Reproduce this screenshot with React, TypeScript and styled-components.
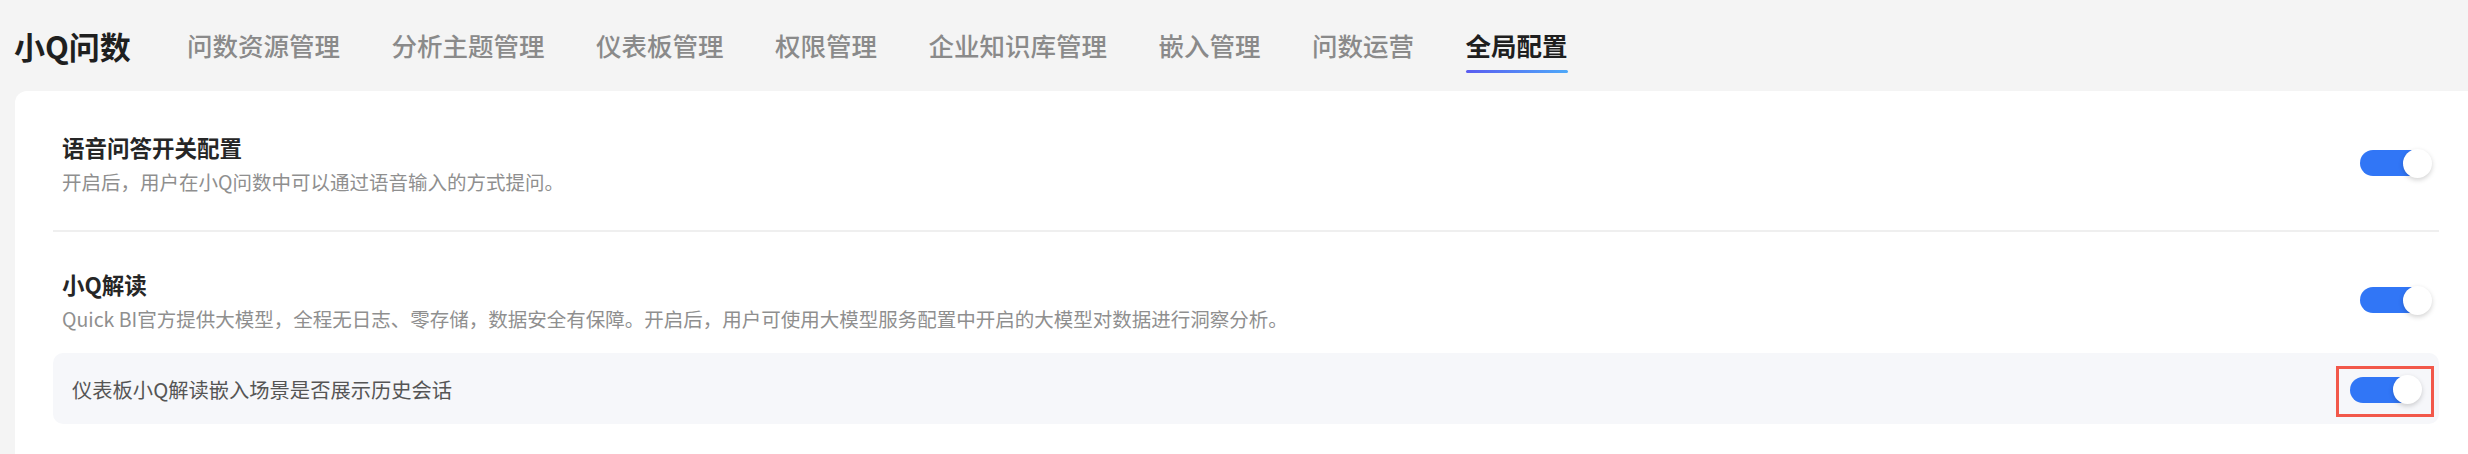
import styled, { createGlobalStyle } from "styled-components"

const GlobalStyle = createGlobalStyle`
  html, body {
    margin: 0;
    padding: 0;
    background: #f4f4f4;
    overflow: hidden;
    font-family: "Noto Sans CJK SC", "Noto Sans", sans-serif;
  }
`

const navItems = ['问数资源管理', '分析主题管理', '仪表板管理', '权限管理', '企业知识库管理', '嵌入管理', '问数运营', '全局配置']

export default function App() {
  return <Page>
    <GlobalStyle />
    <Header>
      <Brand>小Q问数</Brand>
      <Nav>
        {navItems.map(item => (
          <NavItem key={item} active={item === '全局配置'}>{item}</NavItem>
        ))}
      </Nav>
    </Header>

    <Card>
      <Section>
        <Row>
          <Info>
            <Title>语音问答开关配置</Title>
            <Desc>开启后，用户在小Q问数中可以通过语音输入的方式提问。</Desc>
          </Info>
          <Switch />
        </Row>
      </Section>

      <Divider />

      <Section>
        <Row>
          <Info>
            <Title>小Q解读</Title>
            <Desc>Quick BI官方提供大模型，全程无日志、零存储，数据安全有保障。开启后，用户可使用大模型服务配置中开启的大模型对数据进行洞察分析。</Desc>
          </Info>
          <Switch />
        </Row>
        <SubRow>
          <SubLabel>仪表板小Q解读嵌入场景是否展示历史会话</SubLabel>
          <Marked>
            <Switch />
          </Marked>
        </SubRow>
      </Section>
    </Card>
  </Page>
}

function Switch() {
  return <Track>
    <Knob />
  </Track>
}

const Page = styled.div`
  width: 100%;
  height: 454px;
  display: flex;
  flex-direction: column;
`

const Header = styled.div`
  height: 91px;
  flex-shrink: 0;
  display: flex;
  align-items: center;
  gap: 56px;
  padding-left: 14px;
  box-sizing: border-box;
`

const Brand = styled.div`
  font-size: 31px;
  font-weight: 700;
  color: #1f1f1f;
  line-height: 40px;
`

const Nav = styled.div`
  display: flex;
  align-items: center;
  gap: 51.5px;
`

const NavItem = styled.div<{ active?: boolean }>`
  position: relative;
  font-size: 25.5px;
  line-height: 36px;
  color: ${p => p.active ? '#1f1f1f' : '#8a8a8a'};
  font-weight: ${p => p.active ? 700 : 500};
  margin-top: -2px;

  ${p => p.active && `
    &::after {
      content: '';
      position: absolute;
      left: 1px;
      right: 0;
      bottom: -10px;
      height: 3px;
      border-radius: 2px;
      background: linear-gradient(90deg, #5a5cf0, #4ea9f9);
    }
  `}
`

const Card = styled.div`
  flex: 1;
  margin-left: 15px;
  margin-right: -12px;
  background: #fff;
  border-radius: 12px 0 0 0;
  padding: 4px 41px 0 38px;
`

const Section = styled.div`
  padding: 35px 0 34px;
`

const Row = styled.div`
  display: flex;
  align-items: center;
  justify-content: space-between;
  padding: 0 9px 0 9px;
`

const Info = styled.div`
  display: flex;
  flex-direction: column;
  gap: 4px;
`

const Title = styled.div`
  font-size: 22.5px;
  line-height: 34px;
  font-weight: 700;
  color: #262626;
`

const Desc = styled.div`
  font-size: 19.5px;
  line-height: 28px;
  color: #8f8f8f;
`

const Divider = styled.div`
  height: 2px;
  background: #efefef;
`

const SubRow = styled.div`
  margin-top: 20px;
  height: 71px;
  border-radius: 10px;
  background: #f6f7fa;
  display: flex;
  align-items: center;
  justify-content: space-between;
  padding: 0 19px 0 19px;
`

const SubLabel = styled.div`
  font-size: 20.3px;
  line-height: 28px;
  color: #555;
`

const Marked = styled.span`
  position: relative;
  display: flex;
  margin-top: 2px;

  &::after {
    content: '';
    position: absolute;
    top: -11px;
    bottom: -14px;
    left: -14px;
    right: -14px;
    border: 3.5px solid #f2584a;
  }
`

const Track = styled.span`
  width: 70px;
  height: 26px;
  border-radius: 13px;
  background: #3176f6;
  display: flex;
  align-items: center;
  justify-content: flex-end;
`

const Knob = styled.span`
  width: 29px;
  height: 29px;
  border-radius: 50%;
  background: #fff;
  margin-right: -2px;
  box-shadow: 0 2px 5px rgba(0, 0, 0, 0.18);
`
